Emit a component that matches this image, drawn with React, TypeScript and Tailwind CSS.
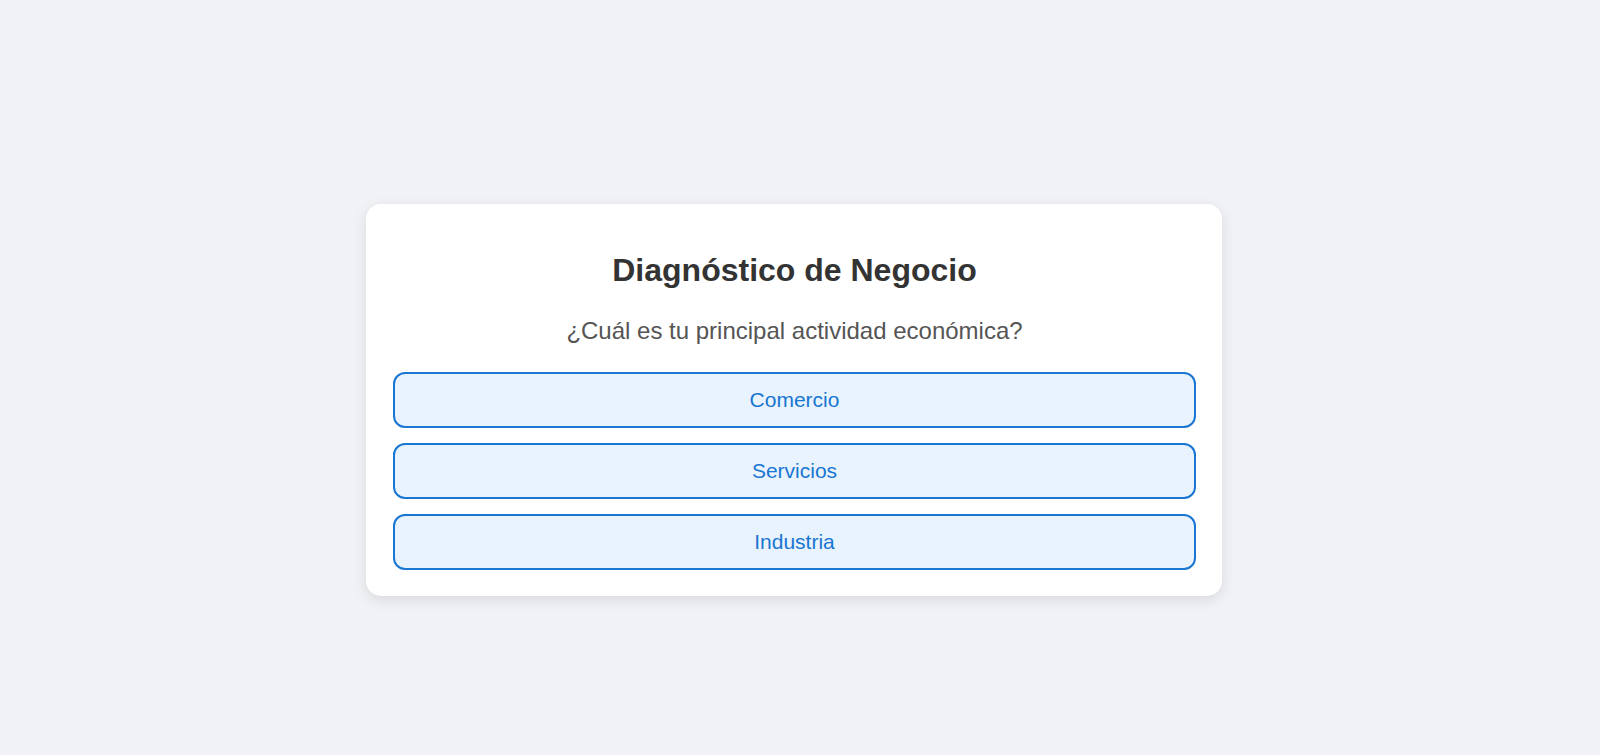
const options = ['Comercio', 'Servicios', 'Industria'];

const App = () => {
  return (
    <div
      className="min-h-screen w-full bg-[#f0f2f5] pt-[204px] pr-[12px] flex justify-center items-start"
      style={{ fontFamily: '"Liberation Sans", Arial, sans-serif' }}
    >
      <div className="w-[856px] bg-white rounded-[15px] shadow-[0_4px_14px_rgba(0,0,0,0.1)] pt-[48px] pl-[27px] pr-[26px] pb-[26px] text-center">
        <h1 className="text-[32px] leading-[36px] font-bold text-[#333333]">
          Diagnóstico de Negocio
        </h1>
        <p className="mt-[29px] text-[24px] leading-[27px] text-[#555555]">
          ¿Cuál es tu principal actividad económica?
        </p>
        <div className="mt-[28px] flex flex-col gap-[15px]">
          {options.map((opt) => (
            <button
              key={opt}
              className="h-[56px] w-full rounded-[12px] border-2 border-[#1976d2] bg-[#e8f3fd] text-[21px] text-[#1976d2] cursor-pointer"
            >
              {opt}
            </button>
          ))}
        </div>
      </div>
    </div>
  );
};

export default App;
